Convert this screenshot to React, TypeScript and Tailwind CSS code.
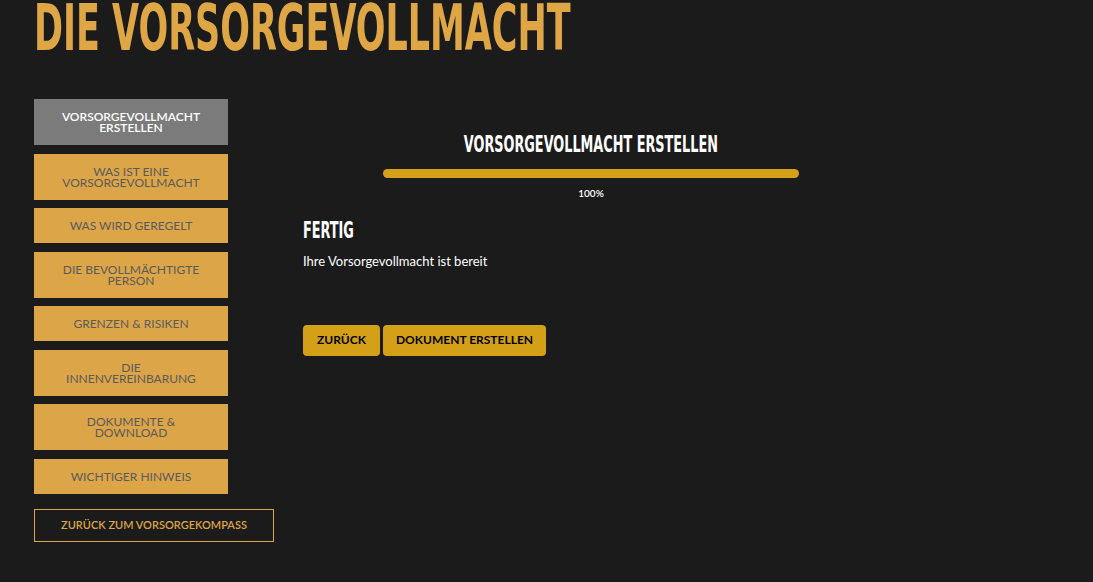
import React from 'react';

const navItems = [
  'Vorsorgevollmacht erstellen',
  'Was ist eine Vorsorgevollmacht',
  'Was wird geregelt',
  'Die bevollmächtigte Person',
  'Grenzen & Risiken',
  'Die Innenvereinbarung',
  'Dokumente & Download',
  'Wichtiger Hinweis',
];

// condensed display face (stand-in for the narrow headline font)
const heading = { fontFamily: '"Liberation Sans Narrow", "DejaVu Sans Condensed", "Liberation Sans", sans-serif' };

export default function App() {
  return (
    <div className="min-h-screen bg-[#1b1b1b] pl-[34px] font-['Lato','Noto_Sans',sans-serif]">
      <h1 className="text-[64px] leading-[56px] font-bold text-[#dfa645] whitespace-nowrap" style={heading}>
        <span className="inline-block origin-left scale-x-[0.607]">DIE VORSORGEVOLLMACHT</span>
      </h1>

      <div className="flex mt-[43px] gap-[29px]">
        {/* Sidebar */}
        <aside className="w-[240px] flex flex-col">
          <nav className="flex flex-col gap-[8.5px] w-[194px]">
            {navItems.map((label, i) => (
              <button
                key={label}
                className={`px-6 py-[12px] text-[12px] leading-[11px] uppercase text-center ${
                  i === 0 ? 'bg-[#7b7b7b] text-white font-semibold' : 'bg-[#dba548] text-[#5b5b5b]'
                }`}
              >
                {label}
              </button>
            ))}
          </nav>
          <button className="mt-[15px] w-[240px] h-[33px] border border-[#dba548] text-[#dba548] text-[11px] font-semibold uppercase">
            Zurück zum Vorsorgekompass
          </button>
        </aside>

        {/* Main */}
        <main className="w-[576px] pt-[34px]">
          <h2 className="text-center text-white text-[23px] font-bold leading-none whitespace-nowrap" style={heading}>
            <span className="inline-block scale-x-[0.62]">VORSORGEVOLLMACHT ERSTELLEN</span>
          </h2>
          <div className="mx-auto mt-[13px] w-[416px] h-[9px] rounded-full bg-[#d4a017]" />
          <div className="text-center text-white text-[10px] font-semibold mt-[8px]">100%</div>

          <h3 className="mt-[18px] text-white text-[23px] font-bold leading-none" style={heading}>
            <span className="inline-block origin-left scale-x-[0.62]">FERTIG</span>
          </h3>
          <p className="mt-[10px] text-white text-[13px]">Ihre Vorsorgevollmacht ist bereit</p>

          <div className="flex gap-[3px] mt-[53px]">
            <button className="h-[31px] w-[77px] rounded-[4px] bg-[#d4a017] text-black text-[12px] font-bold uppercase">
              Zurück
            </button>
            <button className="h-[31px] w-[163px] rounded-[4px] bg-[#d4a017] text-black text-[12px] font-bold uppercase">
              Dokument erstellen
            </button>
          </div>
        </main>
      </div>
    </div>
  );
}
